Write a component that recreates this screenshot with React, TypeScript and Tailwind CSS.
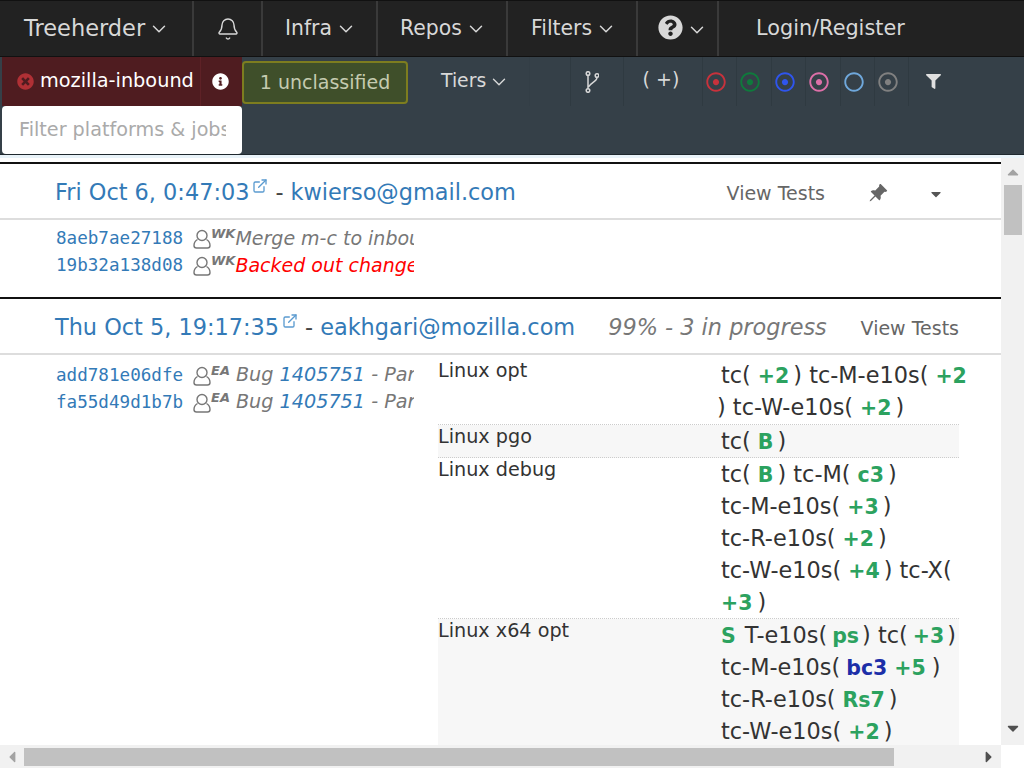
import type { ReactNode } from 'react';
import { Bell, ChevronDown, ExternalLink } from 'lucide-react';
import { BsPinAngleFill } from 'react-icons/bs';
import {
  FaCaretDown,
  FaCaretLeft,
  FaCaretRight,
  FaCaretUp,
  FaFilter,
  FaInfoCircle,
  FaQuestionCircle,
  FaRegCircle,
  FaRegDotCircle,
  FaTimesCircle,
} from 'react-icons/fa';

function Chevron() {
  return <ChevronDown className="ml-[3px] h-[22px] w-[22px]" strokeWidth={1.6} />;
}

function NavCell({ className, children }: { className: string; children: ReactNode }) {
  return (
    <div className={`flex h-full shrink-0 items-center border-r-2 border-[#3a3a3a] ${className}`}>
      {children}
    </div>
  );
}

function UserIcon() {
  return (
    <svg viewBox="0 0 18 20" className="h-[20px] w-[18px] shrink-0" fill="none" stroke="#777" strokeWidth="1.4">
      <circle cx="9" cy="6.5" r="5" />
      <path d="M4.5 10.500C2 12 1 14 1 16.500 1 18 2 19 3.500 19h11c1.500 0 2.500-1 2.500-2.500 0-2.500-1-4.500-3.500-6" />
    </svg>
  );
}

function Commit({ sha, initials, children }: { sha: string; initials: string; children: ReactNode }) {
  return (
    <div className="flex h-[27px] w-[358px] items-center overflow-hidden whitespace-nowrap">
      <span className="w-[137px] shrink-0 font-['DejaVu_Sans_Mono'] text-[17.600px] text-[#337ab7]">{sha}</span>
      <UserIcon />
      <span className="mb-[10px] text-[13px] font-bold italic text-[#777]">{initials}</span>
      {children}
    </div>
  );
}

function Green({ children }: { children: ReactNode }) {
  return <b className="ml-[7px] mr-[4px] text-[20.500px] text-[#2ca25f]">{children}</b>;
}

function PushHeader({ date, author, children }: { date: string; author: string; children: ReactNode }) {
  return (
    <div className="flex h-[56px] items-center border-b-2 border-[#ddd] pl-[55px] pt-[4px] text-[22.400px] text-[#337ab7]">
      <span className="whitespace-nowrap">{date}</span>
      <ExternalLink className="mb-[14px] ml-[3px] h-[16px] w-[16px] shrink-0 text-[#5b9bd0]" strokeWidth={2} />
      <span className="mx-[7px] text-[#444]">-</span>
      <span className="whitespace-nowrap">{author}</span>
      {children}
    </div>
  );
}

function JobRow({ name, shaded, lines, className = '' }: { name: string; shaded?: boolean; lines: ReactNode[]; className?: string }) {
  return (
    <div className={`flex w-[521px] border-b border-dotted border-[#ccc] ${shaded ? 'bg-[#f7f7f7]' : ''} ${className}`}>
      <div className="w-[283px] shrink-0 text-[19.200px] leading-[24px] text-[#333]">{name}</div>
      <div className="shrink-0 whitespace-nowrap text-[22.400px] leading-[32px] text-[#333]">
        {lines.map((line, i) => (
          <div key={i} className="h-[32px]">{line}</div>
        ))}
      </div>
    </div>
  );
}

function CircleCell({ children }: { children: ReactNode }) {
  return <div className="flex h-full w-[34.400px] shrink-0 items-center border-r border-[#2f3a41] pl-[3px]">{children}</div>;
}

export default function App() {
  return (
    <div className="flex h-[768px] w-[1024px] flex-col overflow-hidden bg-white font-['DejaVu_Sans',sans-serif]">
      <nav className="flex h-[57px] shrink-0 items-center border-y border-[#111] bg-[#222] text-[20.400px] text-[#d8d8d8]">
        <NavCell className="w-[194px] pl-[24px]"><span className="text-[22.500px]">Treeherder</span><Chevron /></NavCell>
        <NavCell className="w-[69px] justify-center"><Bell className="h-[24px] w-[24px]" strokeWidth={1.4} /></NavCell>
        <NavCell className="w-[115px] pl-[22px]">Infra<Chevron /></NavCell>
        <NavCell className="w-[130px] pl-[22px]">Repos<Chevron /></NavCell>
        <NavCell className="w-[130px] pl-[23px]">Filters<Chevron /></NavCell>
        <NavCell className="w-[81px] pl-[20px]"><FaQuestionCircle className="mb-[2px] h-[25px] w-[25px]" /><span className="ml-[3px] mt-[2px]"><ChevronDown className="h-[22px] w-[22px]" strokeWidth={1.6} /></span></NavCell>
        <div className="pl-[37px] text-[20.800px]">Login/Register</div>
      </nav>

      <div className="flex h-[98px] shrink-0 border-b border-[#1f282e] bg-[#354048] pl-[2px] text-[#d8d8d8]">
        <div className="flex w-[240px] shrink-0 flex-col">
          <div className="flex h-[49px] items-center bg-[#4f1c20] text-white">
            <div className="flex h-full w-[199px] items-center whitespace-nowrap border-r border-[#5e2126] pl-[15px] text-[19.300px]">
              <FaTimesCircle className="mr-[6px] h-[17px] w-[17px] shrink-0 text-[#b03035]" />
              mozilla-inbound
            </div>
            <FaInfoCircle className="ml-[11px] h-[17px] w-[17px]" />
          </div>
          <div className="flex h-[48px] items-center overflow-hidden rounded-[4px] bg-white pl-[17px] pr-[16px] text-[19.200px] text-[#aaa]">
            <span className="overflow-hidden whitespace-nowrap">Filter platforms &amp; jobs</span>
          </div>
        </div>
        <div className="flex h-[49px] items-center">
          <div className="mt-[2px] flex h-[43px] w-[166px] items-center justify-center rounded-[4px] border-2 border-[#7d7d1f] bg-[#3f4f2a] text-[19px] text-[#c5cbb0]">
            1 unclassified
          </div>
          <div className="flex h-full w-[122px] items-center border-r border-[#333e46] pl-[33px] text-[18.800px]">Tiers<ChevronDown className="ml-[2px] h-[22px] w-[22px]" strokeWidth={1.5} /></div>
          <div className="w-[40px]" />
          <div className="flex h-full w-[54px] items-center border-x border-[#2f3a41] pl-[14px]">
            <svg viewBox="0 0 14 22" className="h-[22px] w-[14px]" fill="none" stroke="#d8d8d8" strokeWidth="1.500">
              <circle cx="3" cy="2.500" r="1.800" />
              <circle cx="12" cy="4.500" r="1.800" />
              <circle cx="3" cy="19.500" r="1.800" />
              <path d="M3 4.500v13M12 6.500c0 4-6 5-8.500 9.500" />
            </svg>
          </div>
          <div className="flex h-full w-[79px] items-center justify-center border-r border-[#2f3a41] pb-[5px] pr-[4px] text-[19px]">( +)</div>
          <CircleCell><FaRegDotCircle className="h-[20px] w-[20px] text-[#c8323c]" /></CircleCell>
          <CircleCell><FaRegDotCircle className="h-[20px] w-[20px] text-[#0f7a3c]" /></CircleCell>
          <CircleCell><FaRegDotCircle className="h-[20px] w-[20px] text-[#2f55ee]" /></CircleCell>
          <CircleCell><FaRegDotCircle className="h-[20px] w-[20px] text-[#dd6fa8]" /></CircleCell>
          <CircleCell><FaRegCircle className="h-[20px] w-[20px] text-[#6fa8dc]" /></CircleCell>
          <CircleCell><FaRegDotCircle className="h-[20px] w-[20px] text-[#808080]" /></CircleCell>
          <FaFilter className="ml-[17px] h-[15px] w-[15px] text-[#e0e0e0]" />
        </div>
      </div>

      <div className="h-[3px] shrink-0 bg-[#e9f3f9]" />

      <div className="flex min-h-0 flex-1">
        <main className="min-w-0 flex-1 overflow-hidden pt-[4px]">
          <section className="h-[135px] border-t-2 border-[#111]">
            <PushHeader date="Fri Oct 6, 0:47:03" author="kwierso@gmail.com">
              <span className="ml-auto text-[19px] text-[#666]">View Tests</span>
              <BsPinAngleFill className="ml-[43px] h-[20px] w-[20px] text-[#666]" />
              <FaCaretDown className="ml-[40px] mr-[57px] mt-[2px] h-[16px] w-[16px] text-[#555]" />
            </PushHeader>
            <div className="pl-[56px] pt-[5px]">
              <Commit sha="8aeb7ae27188" initials="WK">
                <span className="text-[19px] italic text-[#777]">Merge m-c to inbound</span>
              </Commit>
              <Commit sha="19b32a138d08" initials="WK">
                <span className="text-[19px] italic text-[#f00]">Backed out changeset</span>
              </Commit>
            </div>
          </section>

          <section className="border-t-2 border-[#111]">
            <PushHeader date="Thu Oct 5, 19:17:35" author="eakhgari@mozilla.com">
              <span className="ml-[33px] whitespace-nowrap italic text-[#777]">99% - 3 in progress</span>
              <span className="ml-auto mr-[42px] text-[19px] text-[#666]">View Tests</span>
            </PushHeader>
            <div className="flex pl-[56px] pt-[4px]">
              <div className="w-[382px] shrink-0 pt-[3px]">
                <Commit sha="add781e06dfe" initials="EA">
                  <span className="ml-[6px] text-[19.200px] italic text-[#777]">Bug <span className="text-[#337ab7]">1405751</span> - Part 1</span>
                </Commit>
                <Commit sha="fa55d49d1b7b" initials="EA">
                  <span className="ml-[6px] text-[19.200px] italic text-[#777]">Bug <span className="text-[#337ab7]">1405751</span> - Part 2</span>
                </Commit>
              </div>
              <div>
                <JobRow
                  name="Linux opt"
                  className="pb-[1px]"
                  lines={[
                    <>tc(<Green>+2</Green>) tc-M-e10s(<Green>+2</Green></>,
                    <span className="-ml-[4px]">) tc-W-e10s(<Green>+2</Green>)</span>,
                  ]}
                />
                <JobRow name="Linux pgo" shaded lines={[<>tc(<Green>B</Green>)</>]} />
                <JobRow
                  name="Linux debug"
                  lines={[
                    <>tc(<Green>B</Green>) tc-M(<Green>c3</Green>)</>,
                    <>tc-M-e10s(<Green>+3</Green>)</>,
                    <>tc-R-e10s(<Green>+2</Green>)</>,
                    <>tc-W-e10s(<Green>+4</Green>) tc-X(</>,
                    <><b className="mr-[5px] text-[20.500px] text-[#2ca25f]">+3</b>)</>,
                  ]}
                />
                <JobRow
                  name="Linux x64 opt"
                  shaded
                  lines={[
                    <><b className="mr-[9px] text-[20.500px] text-[#2ca25f]">S</b>T-e10s(<b className="ml-[5px] mr-[3px] text-[20.500px] text-[#2ca25f]">ps</b>) tc(<b className="ml-[5px] mr-[3px] text-[20.500px] text-[#2ca25f]">+3</b>)</>,
                    <>tc-M-e10s(<b className="ml-[6px] mr-[7px] text-[20.500px] text-[#1c2fa8]">bc3</b><b className="mr-[6px] text-[20.500px] text-[#2ca25f]">+5</b>)</>,
                    <>tc-R-e10s(<Green>Rs7</Green>)</>,
                    <>tc-W-e10s(<Green>+2</Green>)</>,
                  ]}
                />
              </div>
            </div>
          </section>
        </main>

        <aside className="flex w-[23px] shrink-0 flex-col items-center bg-[#f1f1f1] text-[#a3a3a3]">
          <FaCaretUp className="mt-[5px] h-[18px] w-[18px]" />
          <div className="mt-[4px] h-[50px] w-[18px] bg-[#c1c1c1]" />
          <FaCaretDown className="mb-[8px] mt-auto h-[18px] w-[18px] text-[#505050]" />
        </aside>
      </div>

      <div className="flex h-[23px] shrink-0 items-center text-[#505050]">
        <div className="flex h-full w-[1001px] items-center bg-[#f1f1f1]">
          <FaCaretLeft className="ml-[3px] h-[18px] w-[18px] text-[#a3a3a3]" />
          <div className="ml-[3px] h-[18px] w-[870px] bg-[#c1c1c1]" />
          <FaCaretRight className="ml-auto mr-[3px] h-[18px] w-[18px]" />
        </div>
      </div>
    </div>
  );
}
